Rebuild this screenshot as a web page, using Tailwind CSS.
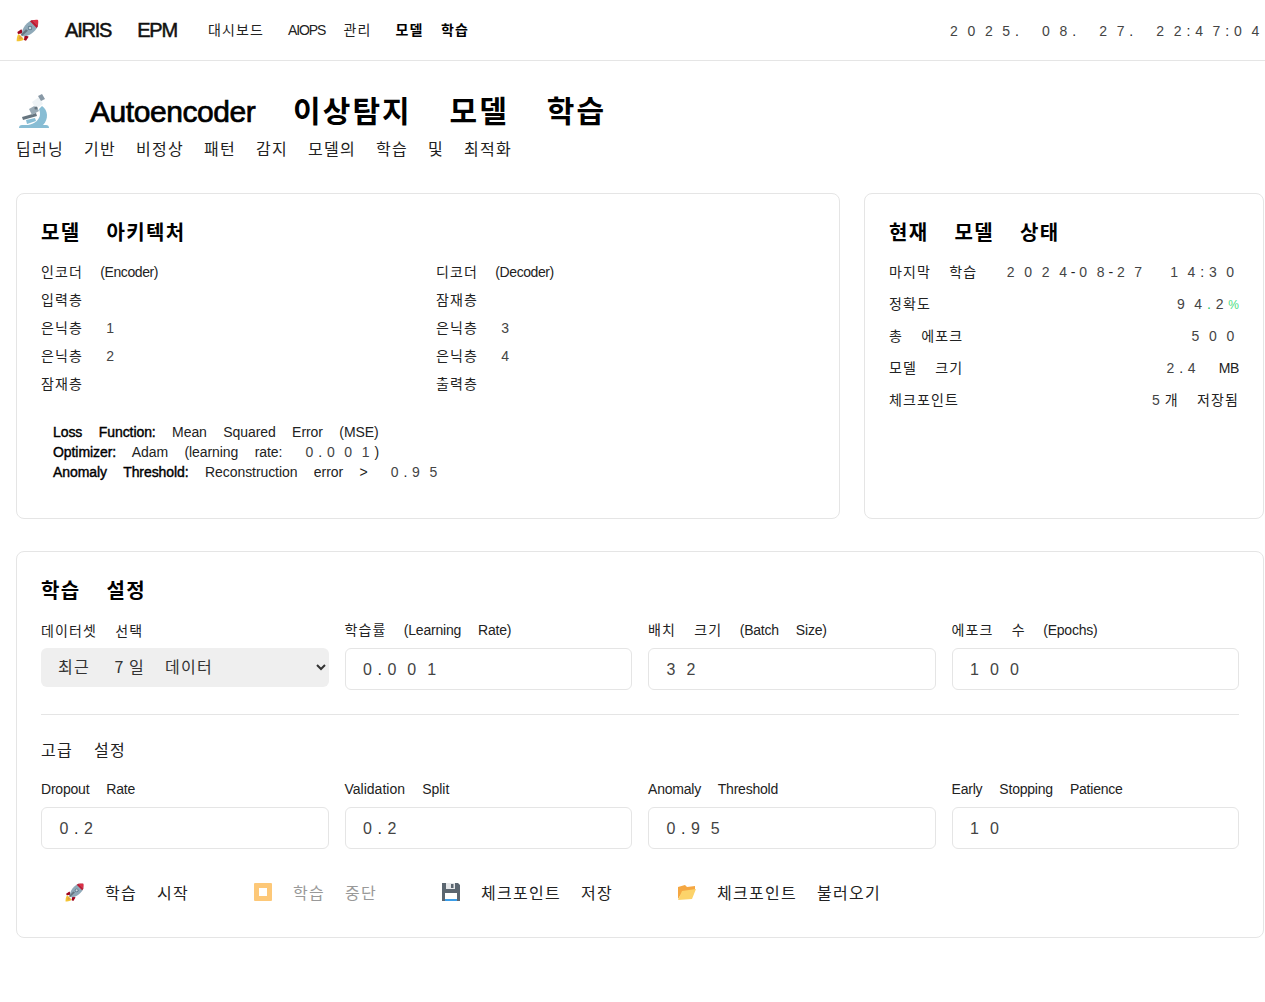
<!DOCTYPE html>
<html lang="ko">
<head>
<meta charset="utf-8">
<title>Autoencoder 이상탐지 모델 학습</title>
<script src="https://cdn.jsdelivr.net/npm/@tailwindcss/browser@4"></script>
</head>
<body class="bg-white text-[#222] font-['Noto_Sans_CJK_KR',sans-serif] [&_*]:tracking-[0.08em] [&_*]:[word-spacing:0.95em] [&_i]:not-italic [&_i]:leading-none [&_i]:font-['Liberation_Sans'] [&_i]:tracking-[0.69em] [&_i]:ml-[0.345em] [&_i]:mr-[-0.345em] [&_i]:text-[#444] [&_em]:not-italic [&_em]:leading-none [&_em]:font-['Liberation_Sans'] [&_em]:tracking-[-0.03em] [&_.p]:leading-none [&_.p]:font-['Liberation_Sans'] [&_.p]:tracking-normal [&_b]:font-normal [&_b]:text-black [&_b]:tracking-[-0.03em] [&_b]:[-webkit-text-stroke:0.4px]">
<svg class="hidden">
  <symbol id="rocket" viewBox="0 0 36 36">
    <path d="M4 24c-3 3-3 9-3 11 2 0 8 0 11-3z" fill="#f4c534"/>
    <path d="M6 26c-2 2-2 5-2 6 1 0 4 0 6-2z" fill="#e8a33d"/>
    <path d="M8 17l-6 4 1 3 8-1zM19 28l-4 6-3-1 1-8z" fill="#a0041e"/>
    <path d="M9 27C7 20 13 8 24 3l9 0 0 9C28 23 16 29 9 27z" fill="#8fa9b8"/>
    <path d="M24 3c3 0 7-1 9-0 1 2 0 6 0 9z" fill="#dd2e44"/>
    <path d="M24 3l9 9-2 3-10-10z" fill="#be1931"/>
    <circle cx="21" cy="15" r="3.4" fill="#5d7b8c"/>
    <circle cx="21" cy="15" r="2" fill="#ccd6dd"/>
    <path d="M9 27l-2-2 8-8 3 2z" fill="#66757f"/>
  </symbol>
</svg>
<header class="h-[61px] border-b border-[#e5e5e5] flex items-center pl-4 pr-px">
  <svg class="w-6 h-6 shrink-0" aria-hidden="true"><use href="#rocket"/></svg>
  <div class="ml-[25px] pb-[2px] text-[20px] text-[#111]"><em class="tracking-[-0.06em]! [word-spacing:1.08em]! [-webkit-text-stroke:0.5px]">AIRIS EPM</em></div>
  <nav class="ml-[31px] pb-[2px] flex gap-6 text-[14px]">
    <a>대시보드</a>
    <a><em class="tracking-[-0.08em]!">AIOPS</em> 관리</a>
    <a class="font-bold text-black [word-spacing:0.9em]!">모델 학습</a>
  </nav>
  <div class="ml-auto text-[14px] whitespace-nowrap"><i>2025</i><span class="p">.</span> <i>08</i><span class="p">.</span> <i>27</i><span class="p">.</span> <i>22</i><span class="p">:</span><i>47</i><span class="p">:</span><i>0</i><i class="tracking-normal! mr-[0.345em]!">4</i></div>
</header>
<main class="pl-4 pr-px pt-8">
  <div class="flex items-center h-9 text-[30px] text-black">
    <svg class="w-9 h-9 shrink-0 mr-[38px]" viewBox="0 0 36 36" aria-hidden="true">
      <path d="M3 35c0-2 1-3 3-3h24c2 0 3 1 3 3z" fill="#88bdd4"/>
      <path d="M26 13c6 4 7 13 1 19H12c6-1 12-5 12-11 0-2-.5-3.500-1-5z" fill="#88bdd4"/>
      <path d="M10 27l9-2 1 3-9 3z" fill="#88bdd4"/>
      <path d="M6 24l14-4 1 3-14 4z" fill="#66757f"/>
      <path d="M13 16l7-4 3 6-7 4z" fill="#99aab5"/>
      <path d="M16 9l7-5 4 7-7 5z" fill="#eef3f6"/>
      <path d="M22 3l4-2 3 5-4 2z" fill="#8899a6"/>
      <circle cx="20" cy="15" r="1.600" fill="#66757f"/>
    </svg>
    <h1 class="pb-[3px] font-bold tracking-[0.07em]! [word-spacing:0.91em]!"><em class="font-normal tracking-[-0.015em]! [-webkit-text-stroke:0.7px]">Autoencoder</em> 이상탐지 모델 학습</h1>
  </div>
  <p class="mt-[7px] text-[16px] leading-6 [word-spacing:0.89em]!">딥러닝 기반 비정상 패턴 감지 모델의 학습 및 최적화</p>

  <div class="mt-[33px] grid grid-cols-[824px_400px] gap-6">
    <section class="h-[326px] border border-[#e5e5e5] rounded-lg p-6">
      <h2 class="text-[20px] font-bold text-black leading-7 tracking-[0.068em]!">모델 아키텍처</h2>
      <div class="mt-[11px] grid grid-cols-2 gap-x-4 text-[14px] leading-7 [&_em]:-ml-px">
        <div>
          <div>인코더 <em>(Encoder)</em></div>
          <div>입력층</div>
          <div>은닉층 <i>1</i></div>
          <div>은닉층 <i>2</i></div>
          <div>잠재층</div>
        </div>
        <div>
          <div>디코더 <em>(Decoder)</em></div>
          <div>잠재층</div>
          <div>은닉층 <i>3</i></div>
          <div>은닉층 <i>4</i></div>
          <div>출력층</div>
        </div>
      </div>
      <div class="mt-[24px] px-3 text-[14px] leading-5 [&_em]:tracking-[-0.005em]! [&_b]:tracking-[-0.005em]! [&_em]:[word-spacing:0.9em]! [&_b]:[word-spacing:0.9em]!">
        <div><em><b>Loss Function:</b> Mean Squared Error (MSE)</em></div>
        <div><em><b>Optimizer:</b> Adam (learning rate:</em> <i>0</i><span class="p">.</span><i>001</i><span class="p">)</span></div>
        <div><em><b>Anomaly Threshold:</b> Reconstruction error &gt;</em> <i>0</i><span class="p">.</span><i>95</i></div>
      </div>
    </section>
    <section class="h-[326px] border border-[#e5e5e5] rounded-lg p-6">
      <h2 class="text-[20px] font-bold text-black leading-7 tracking-[0.068em]!">현재 모델 상태</h2>
      <dl class="mt-[13px] text-[14px] leading-6 flex flex-col gap-2">
        <div class="flex justify-between"><dt>마지막 학습</dt><dd class="whitespace-nowrap"><i>2024</i><span class="p mx-[-1px]">-</span><i>08</i><span class="p mx-[-1px]">-</span><i>27</i> <i>14</i><span class="p">:</span><i>30</i></dd></div>
        <div class="flex justify-between"><dt>정확도</dt><dd><i>94</i><span class="p text-[#22c55e]">.</span><i>2</i><span class="p text-[12px] text-[#4ade80]">%</span></dd></div>
        <div class="flex justify-between"><dt>총 에포크</dt><dd><i>500</i></dd></div>
        <div class="flex justify-between"><dt>모델 크기</dt><dd><i>2</i><span class="p">.</span><i>4</i> <em>MB</em></dd></div>
        <div class="flex justify-between"><dt>체크포인트</dt><dd><i>5</i>개 저장됨</dd></div>
      </dl>
    </section>
  </div>

  <section class="mt-8 h-[387px] border border-[#e5e5e5] rounded-lg p-6">
    <h2 class="text-[20px] font-bold text-black leading-7 tracking-[0.068em]!">학습 설정</h2>
    <div class="mt-4 grid grid-cols-4 gap-4 items-start text-[14px] [&_em]:-ml-px [&_em]:tracking-[-0.015em]!">
      <div>
        <label class="block leading-5 mb-2">데이터셋 선택</label>
        <select class="w-full h-[39px] rounded-md bg-[#efefef] pl-[13px] pr-[13px] pb-[3px] text-[16px] text-[#333] [word-spacing:0.89em]!"><option>최근 &#8201;7&#8201;일 데이터</option></select>
      </div>
      <div>
        <label class="block leading-5 -mt-px mb-[9px]">학습률 <em>(Learning Rate)</em></label>
        <div class="h-[42px] border border-[#e5e5e5] rounded-md px-3 pb-[2px] flex items-center text-[16px]"><span><i>0</i><span class="p">.</span><i>001</i></span></div>
      </div>
      <div>
        <label class="block leading-5 -mt-px mb-[9px]">배치 크기 <em>(Batch Size)</em></label>
        <div class="h-[42px] border border-[#e5e5e5] rounded-md px-3 pb-[2px] flex items-center text-[16px]"><span><i>32</i></span></div>
      </div>
      <div>
        <label class="block leading-5 -mt-px mb-[9px]">에포크 수 <em>(Epochs)</em></label>
        <div class="h-[42px] border border-[#e5e5e5] rounded-md px-3 pb-[2px] flex items-center text-[16px]"><span><i>100</i></span></div>
      </div>
    </div>
    <hr class="mt-6 border-[#e5e5e5]">
    <h3 class="mt-[22px] text-[16px] leading-6">고급 설정</h3>
    <div class="mt-[17px] grid grid-cols-4 gap-4 text-[14px]">
      <div>
        <label class="block leading-5 mb-[9px]"><em class="tracking-[-0.015em]!">Dropout Rate</em></label>
        <div class="h-[42px] border border-[#e5e5e5] rounded-md px-3 pb-[2px] flex items-center text-[16px]"><span><i>0</i><span class="p">.</span><i>2</i></span></div>
      </div>
      <div>
        <label class="block leading-5 mb-[9px]"><em class="tracking-[0em]!">Validation Split</em></label>
        <div class="h-[42px] border border-[#e5e5e5] rounded-md px-3 pb-[2px] flex items-center text-[16px]"><span><i>0</i><span class="p">.</span><i>2</i></span></div>
      </div>
      <div>
        <label class="block leading-5 mb-[9px]"><em class="tracking-[-0.015em]!">Anomaly Threshold</em></label>
        <div class="h-[42px] border border-[#e5e5e5] rounded-md px-3 pb-[2px] flex items-center text-[16px]"><span><i>0</i><span class="p">.</span><i>95</i></span></div>
      </div>
      <div>
        <label class="block leading-5 mb-[9px]"><em class="tracking-[-0.015em]!">Early Stopping Patience</em></label>
        <div class="h-[42px] border border-[#e5e5e5] rounded-md px-3 pb-[2px] flex items-center text-[16px]"><span><i>10</i></span></div>
      </div>
    </div>
    <div class="mt-[23px] flex gap-4 text-[16px] [&_span]:[word-spacing:0.89em]!">
      <button class="h-10 px-6 flex items-center gap-5"><svg class="w-5 h-5" aria-hidden="true"><use href="#rocket"/></svg><span>학습 시작</span></button>
      <button class="h-10 px-6 flex items-center gap-5 text-[#999]"><svg class="w-5 h-5" viewBox="0 0 20 20" aria-hidden="true"><rect x="1" y="1" width="18" height="18" rx="1" fill="#fdc878"/><rect x="6" y="6" width="8" height="8" fill="#fff"/></svg><span>학습 중단</span></button>
      <button class="h-10 px-6 flex items-center gap-5"><svg class="w-5 h-5" viewBox="0 0 20 20" aria-hidden="true"><path d="M1 1h16l2 2v16H1z" fill="#5b6670"/><rect x="5" y="1" width="9" height="6" fill="#e6e8ea"/><rect x="10" y="2" width="2.500" height="4" fill="#5b6670"/><rect x="4" y="11" width="12" height="7" fill="#fff"/><rect x="4" y="17" width="12" height="2" fill="#3b9de8"/></svg><span>체크포인트 저장</span></button>
      <button class="h-10 px-6 flex items-center gap-5"><svg class="w-5 h-5" viewBox="0 0 20 20" aria-hidden="true"><path d="M1 17V5l7-2 2 2 8-1v4L5 11z" fill="#f5a742"/><path d="M1 18l4-9 14-2-4 10z" fill="#fcd36a"/></svg><span>체크포인트 불러오기</span></button>
    </div>
  </section>
</main>
</body>
</html>
